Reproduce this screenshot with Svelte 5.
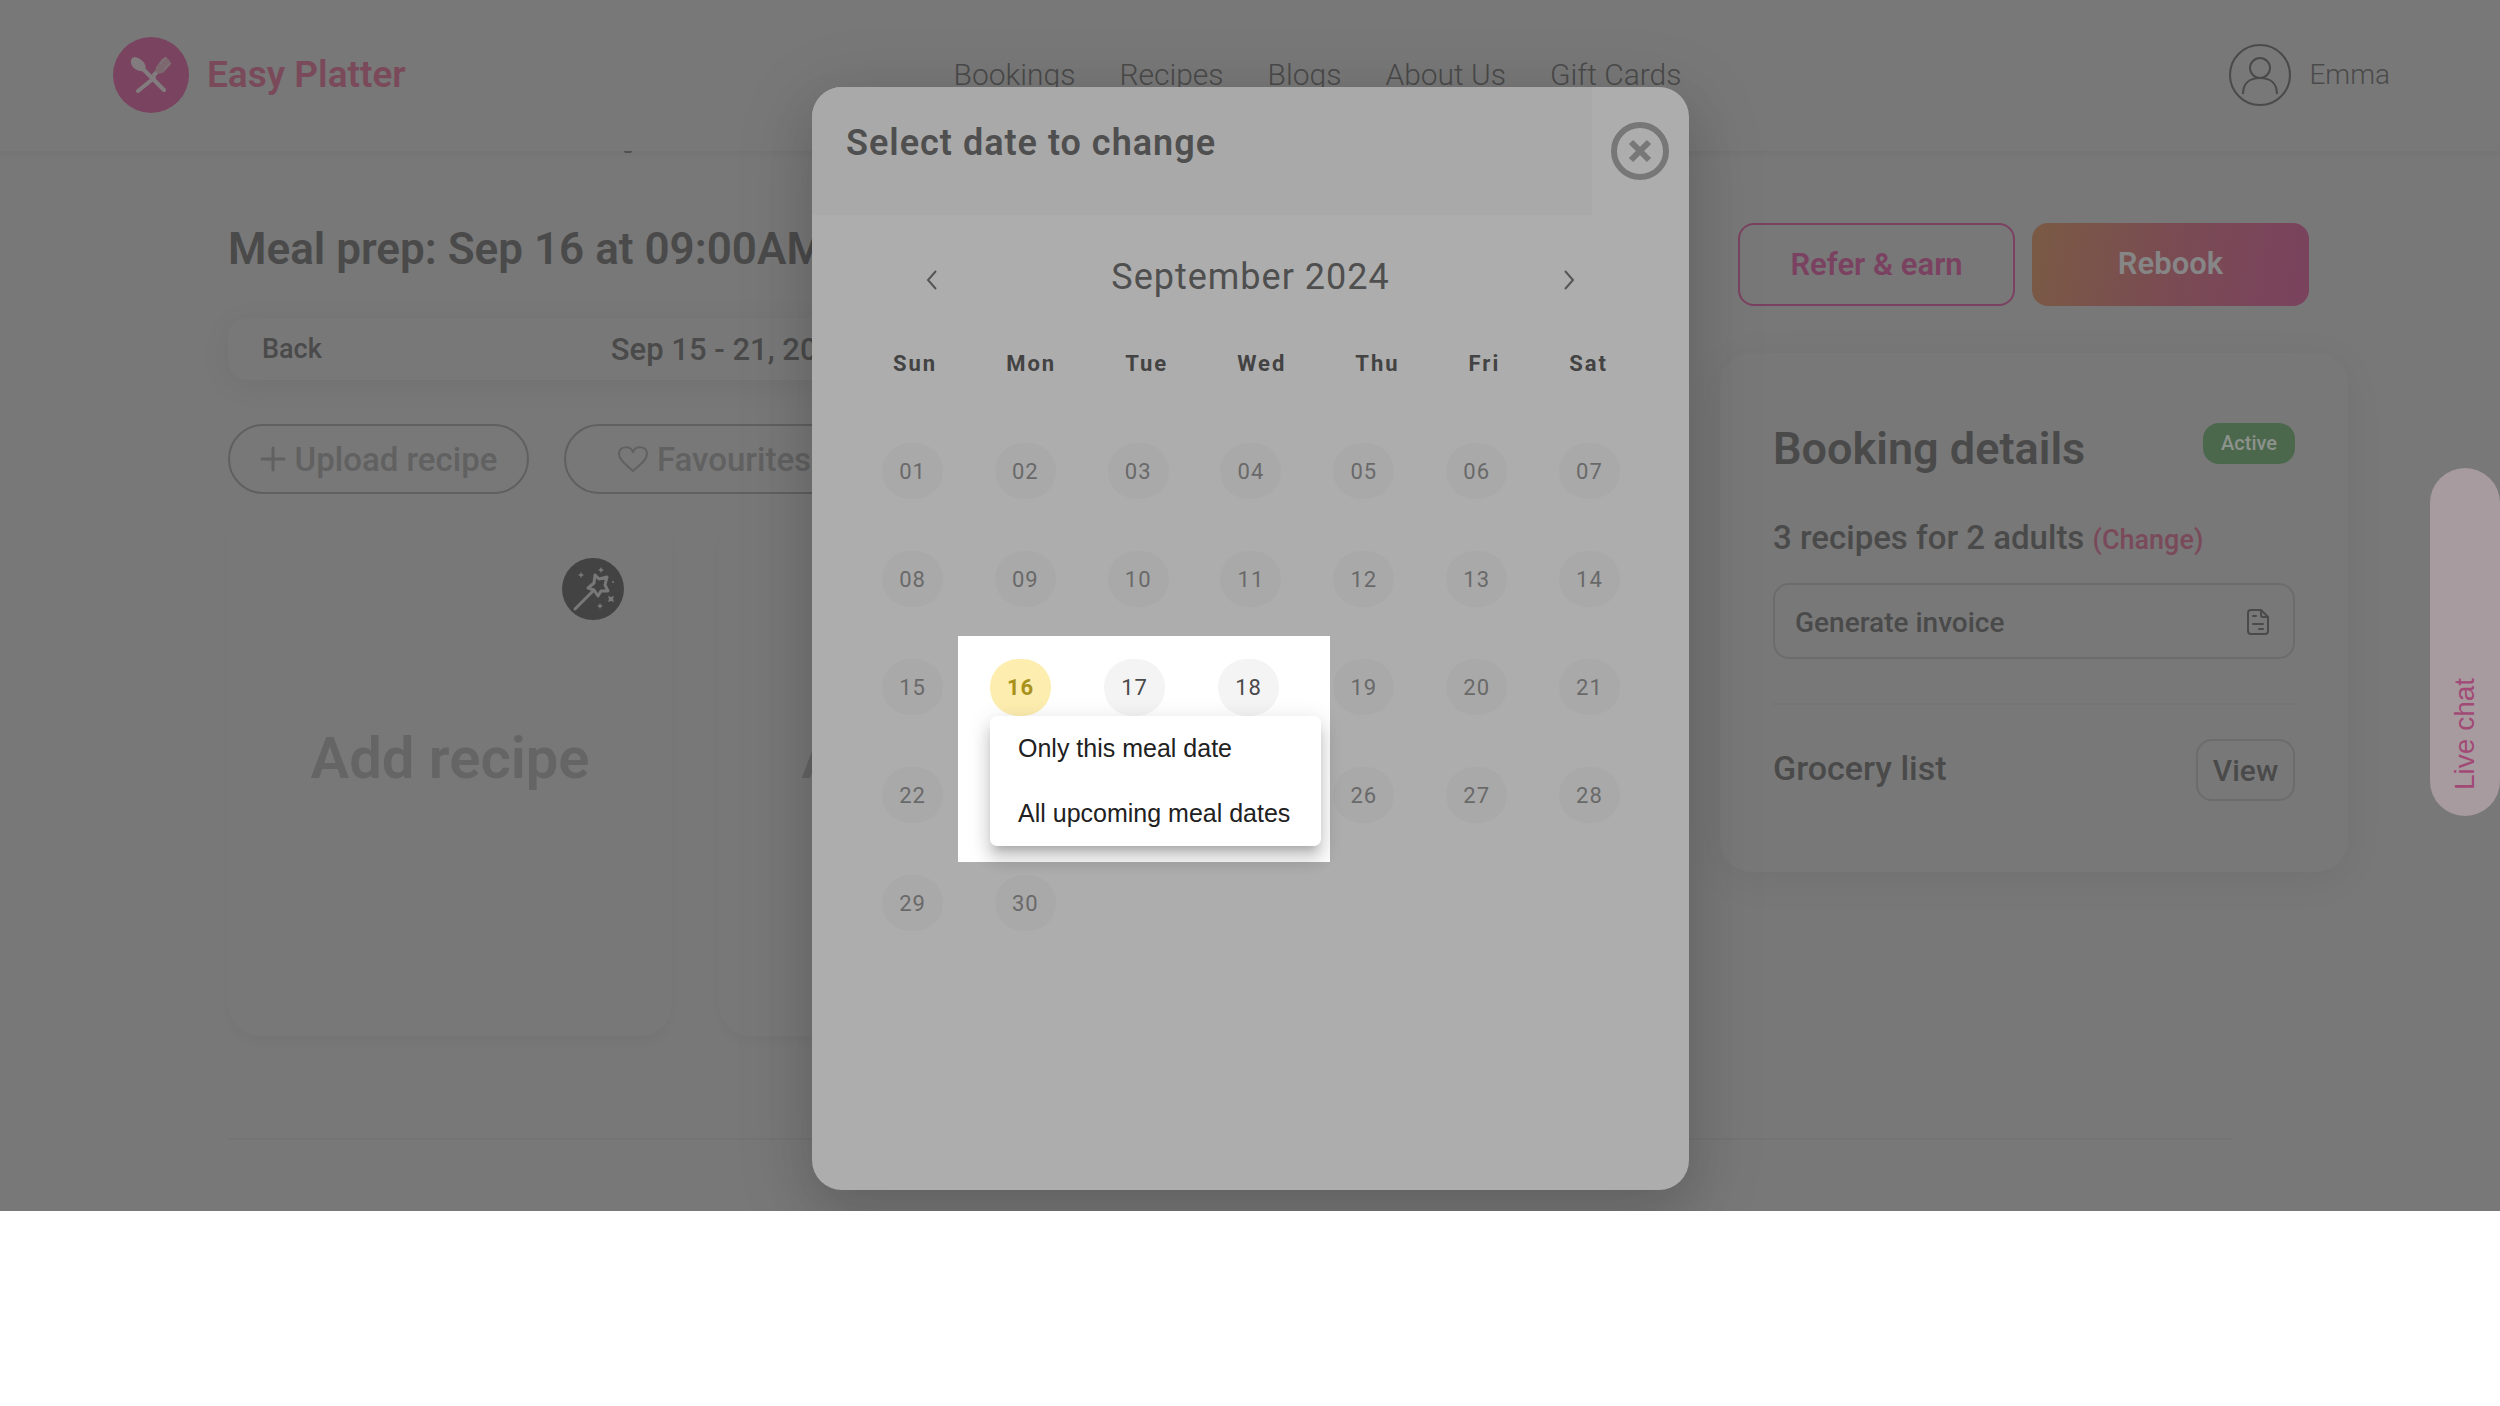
<script>
  const links = ['Bookings', 'Recipes', 'Blogs', 'About Us', 'Gift Cards'];
  const weekdays = ['Sun', 'Mon', 'Tue', 'Wed', 'Thu', 'Fri', 'Sat'];
  const days = Array.from({ length: 30 }, (_, i) => String(i + 1).padStart(2, '0'));
  // Days that lie beneath the spotlight keep their grid cell but show no label.
  const covered = ['16', '17', '18', '23', '24', '25'];
  const recipeSlots = [1, 2];
  const choices = ['Only this meal date', 'All upcoming meal dates'];
</script>

<div class="page">
  <header class="topbar">
    <a class="brand" href="/">
      <svg class="logo" viewBox="0 0 76 76" aria-hidden="true">
        <circle cx="38" cy="38" r="38" fill="#7a4460" />
        <path d="M41 41 L25 54" stroke="#827c7e" stroke-width="4" stroke-linecap="round" />
        <path d="M31 33 L51 53" stroke="#827c7e" stroke-width="4" stroke-linecap="round" />
        <path d="M18 26 C17 20 22 19 27 22 C31 25 34 28 32 34 C26 35 19 32 18 26 Z" fill="#827c7e" />
        <path d="M40 39 L45 34" stroke="#827c7e" stroke-width="4" />
        <path d="M43 30 L49 22 L53 20 L57 24 L58 27 L51 35 Q46 38 43 35 Q42 32 43 30 Z" fill="#7c686e" />
        <path d="M53 20 L47 27 M58 26 L51 32" stroke="#827c7e" stroke-width="1" />
      </svg>
      <span>Easy Platter</span>
    </a>
    <nav>
      {#each links as link}
        <a href="/">{link}</a>
      {/each}
    </nav>
    <a class="user" href="/">
      <svg viewBox="0 0 62 62" aria-hidden="true" fill="none" stroke="#4a4a4a" stroke-width="2">
        <circle cx="31" cy="31" r="30" />
        <circle cx="31" cy="24" r="10" />
        <path d="M14 50 C14 40 20 34 31 34 C42 34 48 40 48 50" />
      </svg>
      <span>Emma</span>
    </a>
    <span class="peek" aria-hidden="true"></span>
  </header>

  <main>
    <section class="plan">
      <h1>Meal prep: Sep 16 at 09:00AM</h1>
      <div class="week">
        <button class="back">Back</button>
        <span>Sep 15 - 21, 2024</span>
      </div>
      <div class="actions">
        <button>
          <svg viewBox="0 0 26 26" aria-hidden="true" fill="none" stroke="currentColor" stroke-width="3" stroke-linecap="round"><path d="M13 2 V24 M2 13 H24" /></svg>
          Upload recipe
        </button>
        <button>
          <svg class="heart" viewBox="0 0 30 26" aria-hidden="true" fill="none" stroke="currentColor" stroke-width="2" stroke-linejoin="round"><path d="M15 25 C6 17 1 13 1 8 C1 0 12 -1 15 6 C18 -1 29 0 29 8 C29 13 24 17 15 25 Z" /></svg>
          Favourites
        </button>
      </div>
      <div class="slots">
        {#each recipeSlots as slot}
          <div class="slot">
            <button class="add">Add recipe</button>
            <button class="wand" aria-label="Surprise me">
              <svg viewBox="0 0 62 62" aria-hidden="true">
                <circle cx="31" cy="31" r="31" fill="#434343" />
                <path d="M13 51 L31 33" stroke="#787878" stroke-width="3" stroke-linecap="round" />
                <path d="M33 17 L37 21 L45 19 L43 27 L46 33 L39 33 L36 38 L32 32 L26 30 L32 25 Z" fill="none" stroke="#787878" stroke-width="3" stroke-linejoin="round" />
                <path d="M19 14 L20 16 L22 17 L20 18 L19 20 L18 18 L16 17 L18 16 Z M39 9 L40 11 L42 12 L40 13 L39 15 L38 13 L36 12 L38 11 Z M38 45 L39 47 L41 48 L39 49 L38 51 L37 49 L35 48 L37 47 Z" fill="#787878" />
                <path d="M46 38 L49 39 L52 38 L51 41 L52 44 L49 43 L46 44 L47 41 Z" fill="#787878" />
                <circle cx="51" cy="24" r="1" fill="#787878" />
              </svg>
            </button>
          </div>
        {/each}
      </div>
    </section>

    <aside>
      <div class="cta">
        <button class="refer">Refer &amp; earn</button>
        <button class="rebook">Rebook</button>
      </div>
      <section class="details">
        <div class="details-head">
          <h2>Booking details</h2>
          <span class="pill">Active</span>
        </div>
        <p class="summary">3 recipes for 2 adults <a href="/">(Change)</a></p>
        <button class="invoice">
          Generate invoice
          <svg viewBox="0 0 22 26" aria-hidden="true" fill="none" stroke="currentColor" stroke-width="2" stroke-linejoin="round" stroke-linecap="round">
            <path d="M4 1 H14 L21 8 V22 Q21 25 18 25 H4 Q1 25 1 22 V4 Q1 1 4 1 Z" />
            <path d="M14 1 V6 Q14 8 16 8 H21" />
            <path d="M6 7 H9 M6 15 H16 M12 20 H16" />
          </svg>
        </button>
        <div class="grocery">
          <h3>Grocery list</h3>
          <button>View</button>
        </div>
      </section>
    </aside>
  </main>
  <hr />

  <button class="chat">Live chat</button>

  <div class="overlay">
    <div class="modal" role="dialog" aria-labelledby="dialog-title">
      <div class="modal-head">
        <h2 id="dialog-title">Select date to change</h2>
        <button class="close" aria-label="Close">
          <svg viewBox="0 0 58 58" aria-hidden="true" fill="none" stroke="#777">
            <circle cx="29" cy="29" r="26" stroke-width="6" />
            <path d="M20 20 L38 38 M38 20 L20 38" stroke-width="6" />
          </svg>
        </button>
      </div>
      <div class="month">
        <button aria-label="Previous month">
          <svg viewBox="0 0 12 20" aria-hidden="true"><path d="M10 1 L2 10 L10 19" /></svg>
        </button>
        <span>September 2024</span>
        <button aria-label="Next month">
          <svg viewBox="0 0 12 20" aria-hidden="true"><path d="M2 1 L10 10 L2 19" /></svg>
        </button>
      </div>
      <div class="weekdays">
        {#each weekdays as name}<span>{name}</span>{/each}
      </div>
      <div class="days">
        {#each days as day}
          {#if covered.includes(day)}<span class="gap"></span>{:else}<button class="day">{day}</button>{/if}
        {/each}
        <div class="spotlight">
          <div class="spot-row">
            <button class="day active">16</button>
            <button class="day open">17</button>
            <button class="day open">18</button>
          </div>
          <div class="menu" role="menu">
            {#each choices as choice}<button role="menuitem">{choice}</button>{/each}
          </div>
        </div>
      </div>
    </div>
  </div>
</div>

<style>
  :global(body) { margin: 0; background: #fff; }
  .page, .page :global(*) { box-sizing: border-box; }
  .page {
    position: relative;
    overflow: hidden;
    background: #787878;
    color: #4a4a4a;
    font-family: Roboto, "Liberation Sans", sans-serif;
    padding-bottom: 71px;
  }
  button {
    font: inherit;
    color: inherit;
    letter-spacing: inherit;
    background: none;
    border: 0;
    padding: 0;
    margin: 0;
  }
  a { color: inherit; text-decoration: none; }
  h1, h2, h3, p { margin: 0; font-weight: 600; }
  svg { display: block; flex: none; }

  .topbar {
    position: relative;
    display: flex;
    align-items: center;
    justify-content: space-between;
    height: 151px;
    padding: 0 110px 2px 113px;
    box-shadow: 0 2px 8px rgba(0, 0, 0, 0.05);
  }
  .brand { display: flex; align-items: center; gap: 18px; font-size: 37px; font-weight: 600; color: #7a4a5a; }
  .logo { width: 76px; height: 76px; }
  nav { display: flex; gap: 44px; font-size: 30px; font-weight: 300; }
  .user { display: flex; align-items: center; gap: 18px; font-size: 28px; font-weight: 300; }
  .user svg { width: 62px; height: 62px; }
  .peek { position: absolute; left: 624px; top: 151px; width: 8px; height: 2px; border-radius: 0 0 4px 4px; background: #4f4f4f; }

  main {
    display: grid;
    grid-template-columns: 1fr 628px;
    column-gap: 66px;
    padding: 72px 152px 0 228px;
  }
  h1 { font-size: 44px; line-height: 52px; white-space: nowrap; }
  .week {
    position: relative;
    display: flex;
    align-items: center;
    height: 62px;
    margin-top: 43px;
    padding: 0 34px;
    border-radius: 20px;
    box-shadow: 0 6px 32px rgba(0, 0, 0, 0.06);
    font-size: 31px;
    font-weight: 500;
  }
  .week span { flex: 1; padding-left: 289px; }
  .back { font-size: 27px; }
  .actions { display: flex; gap: 35px; margin-top: 44px; }
  .actions button {
    display: flex;
    align-items: center;
    justify-content: center;
    gap: 9px;
    width: 301px;
    height: 70px;
    border: 2px solid #606060;
    border-radius: 35px;
    color: #616161;
    font-size: 33px;
    font-weight: 500;
  }
  .actions svg { width: 26px; height: 26px; }
  .actions .heart { width: 30px; }
  .slots { display: grid; grid-template-columns: repeat(3, 1fr); gap: 47px; margin-top: 14px; }
  .slot {
    position: relative;
    display: flex;
    align-items: center;
    justify-content: center;
    height: 528px;
    padding-bottom: 28px;
    border-radius: 32px;
    box-shadow: 0 8px 12px -2px rgba(0, 0, 0, 0.03);
  }
  .add { font-size: 58px; font-weight: 600; color: #656565; }
  .wand { position: absolute; top: 50px; right: 48px; }
  .wand svg { width: 62px; height: 62px; }
  hr { margin: 102px 268px 0 228px; border: 0; border-top: 2px solid #747474; }

  .cta { display: grid; grid-template-columns: 1fr 1fr; gap: 17px; padding: 0 39px 0 18px; }
  .cta button { height: 83px; border-radius: 16px; font-size: 31px; font-weight: 600; }
  .cta .refer { border: 2px solid #7a4260; color: #7a4260; }
  .cta .rebook { padding-bottom: 3px; color: #868686; background: linear-gradient(100deg, #7a5a44, #7a4a54 55%, #7a425e); }
  .details {
    margin-top: 47px;
    padding: 70px 53px 71px;
    border-radius: 32px;
    box-shadow: 0 8px 40px rgba(0, 0, 0, 0.06);
  }
  .details-head { display: flex; justify-content: space-between; align-items: flex-start; }
  h2 { font-size: 45px; line-height: 52px; }
  .pill {
    height: 41px;
    padding: 0 18px;
    border-radius: 16px;
    background: #4c684c;
    color: #8c928c;
    font-size: 20px;
    line-height: 40px;
    font-weight: 500;
  }
  .summary { margin-top: 43px; font-size: 33px; line-height: 40px; font-weight: 500; }
  .summary a { font-size: 27px; color: #7a4a5a; }
  .invoice {
    display: flex;
    align-items: center;
    justify-content: space-between;
    width: 100%;
    height: 76px;
    margin-top: 23px;
    padding: 2px 24px 0 20px;
    border: 2px solid #6c6c6c;
    border-radius: 16px;
    font-size: 28px;
    font-weight: 500;
  }
  .invoice svg { width: 22px; height: 26px; }
  .grocery {
    display: flex;
    align-items: center;
    justify-content: space-between;
    margin-top: 44px;
    padding-top: 34px;
    border-top: 2px solid #747474;
  }
  h3 { padding-bottom: 5px; font-size: 34px; line-height: 40px; font-weight: 500; }
  .grocery button { width: 99px; height: 62px; border: 2px solid #6c6c6c; border-radius: 16px; font-size: 30px; font-weight: 500; }

  .chat {
    position: absolute;
    right: 0;
    top: 468px;
    width: 70px;
    height: 348px;
    padding-top: 26px;
    border-radius: 35px;
    background: #a89ba0;
    color: #a14a76;
    font-family: "Liberation Sans", Arial, sans-serif;
    font-size: 28px;
    text-align: left;
    writing-mode: vertical-rl;
    transform: rotate(180deg);
  }

  .overlay { position: absolute; inset: 0; display: flex; justify-content: center; align-items: flex-start; padding: 87px 0 0 1px; }
  .modal {
    width: 877px;
    padding-bottom: 259px;
    border-radius: 30px;
    background: #adadad;
    box-shadow: 0 15px 75px 10px rgba(0, 0, 0, 0.1), 0 24px 50px 0 rgba(0, 0, 0, 0.1);
    letter-spacing: 1px;
  }
  .modal-head { display: flex; }
  .modal-head h2 {
    flex: 1;
    padding: 34px 34px 50px;
    border-radius: 30px 0 0 0;
    background: #a9a9a9;
    color: #4f4f4f;
    font-size: 36px;
    line-height: 44px;
  }
  .close { align-self: flex-start; margin: 35px 20px 0 19px; }
  .close svg { width: 58px; height: 58px; }
  .month {
    display: flex;
    align-items: center;
    justify-content: space-between;
    margin-top: 40px;
    padding: 0 114px;
    color: #4f4f4f;
    font-size: 36px;
    line-height: 44px;
  }
  .month button { padding-top: 6px; }
  .month svg { width: 12px; height: 20px; fill: none; stroke: #555; stroke-width: 2; }
  .weekdays {
    display: flex;
    justify-content: space-between;
    margin-top: 51px;
    padding: 0 81px;
    color: #434343;
    font-size: 22px;
    line-height: 28px;
    font-weight: 700;
    letter-spacing: 2px;
  }
  .days {
    position: relative;
    display: grid;
    grid-template-columns: repeat(7, 61px);
    justify-content: space-between;
    row-gap: 52px;
    margin-top: 65px;
    padding: 0 69px 0 70px;
  }
  .day {
    width: 61px;
    height: 56px;
    border-radius: 28px;
    background: #a9a9a9;
    color: #696969;
    font-size: 22px;
  }
  .spotlight {
    position: absolute;
    left: 146px;
    top: 193px;
    width: 372px;
    padding: 23px 9px 16px 32px;
    background: #fff;
    letter-spacing: 0;
  }
  .spot-row { display: flex; gap: 53px; letter-spacing: 1px; }
  .spot-row .day { height: 57px; }
  .day.open { background: #f4f4f4; color: #4a4a4a; }
  .day.active { background: #fdedaf; color: #a8921c; font-weight: 700; }
  .menu {
    position: relative;
    display: flex;
    flex-direction: column;
    border-radius: 7px;
    background: #fff;
    box-shadow: 0 8px 8px -5px rgba(0, 0, 0, 0.2), 0 13px 16px 2px rgba(0, 0, 0, 0.12), 0 5px 22px 3px rgba(0, 0, 0, 0.1);
  }
  .menu button {
    height: 65px;
    padding: 0 28px;
    color: #212121;
    font-family: "Liberation Sans", Arial, sans-serif;
    font-size: 25px;
    text-align: left;
  }
</style>
